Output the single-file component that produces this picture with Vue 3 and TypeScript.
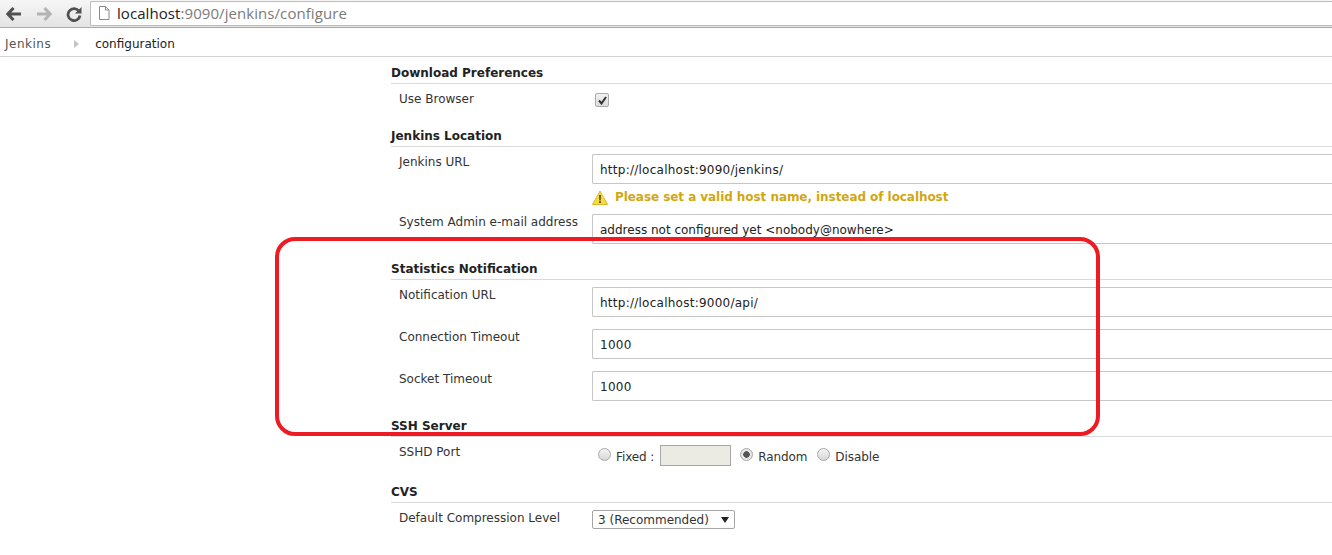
<script setup lang="ts">
import { ref } from 'vue';

const useBrowser = ref(true);
const sshMode = ref('random');

const statsRows = [
  { label: 'Notification URL', value: 'http://localhost:9000/api/' },
  { label: 'Connection Timeout', value: '1000' },
  { label: 'Socket Timeout', value: '1000' },
];
</script>

<template>
  <div class="page">
    <header class="toolbar">
      <svg class="nav" width="16" height="14" viewBox="0 0 16 14"><path d="M7.500 1 1.800 7l5.700 6M2.500 7H15" fill="none" stroke="#505050" stroke-width="3" /></svg>
      <svg class="nav fwd" width="16" height="14" viewBox="0 0 16 14"><path d="M8.500 1l5.700 6-5.700 6M13.500 7H1" fill="none" stroke="#b4b4b4" stroke-width="3" /></svg>
      <svg class="nav reload" width="16" height="16" viewBox="0 0 16 16"><path d="M13 5.200A6 6 0 1 0 14 9.500" fill="none" stroke="#505050" stroke-width="2.800" /><path d="M15.500 1v6.500H9z" fill="#505050" /></svg>
      <div class="omnibox">
        <svg width="12" height="14" viewBox="0 0 12 14"><path d="M1.500.5h6l3.500 3.500v9.500h-9.500zM7.500.5V4H11" fill="#fff" stroke="#8a8a8a" /></svg>
        <span class="url"><span class="host">localhost</span>:9090/jenkins/configure</span>
      </div>
    </header>

    <nav class="breadcrumbs">
      <a class="crumb">Jenkins</a>
      <span class="sep"></span>
      <a class="crumb current">configuration</a>
    </nav>

    <main class="form">
      <section class="section first">
        <h3>Download Preferences</h3>
        <div class="row check-row">
          <label>Use Browser</label>
          <span class="checkbox" :class="{ on: useBrowser }">
            <svg v-if="useBrowser" width="9" height="9" viewBox="0 0 9 9"><path d="M1 4.500 3.500 7.500 8 1" fill="none" stroke="#333" stroke-width="2" /></svg>
          </span>
        </div>
      </section>

      <section class="section location">
        <h3>Jenkins Location</h3>
        <div class="row">
          <label>Jenkins URL</label>
          <input class="text wide" value="http://localhost:9090/jenkins/" />
        </div>
        <div class="warning">
          <svg width="16" height="15" viewBox="0 0 16 15"><path d="M8 1 15.500 14.500H.5z" fill="#f7dc3c" stroke="#d9b92a" stroke-linejoin="round" /><path d="M7.200 5h1.600l-.2 5.500H7.400zM7.200 11.300h1.600v1.600H7.200z" fill="#333" /></svg>
          <span>Please set a valid host name, instead of localhost</span>
        </div>
        <div class="row">
          <label>System Admin e-mail address</label>
          <input class="text" value="address not configured yet &lt;nobody@nowhere&gt;" />
        </div>
      </section>

      <section class="section stats">
        <h3>Statistics Notification</h3>
        <div v-for="row in statsRows" :key="row.label" class="row spaced">
          <label>{{ row.label }}</label>
          <input class="text wide" :value="row.value" />
        </div>
      </section>

      <section class="section ssh">
        <h3>SSH Server</h3>
        <div class="row ssh-row">
          <label>SSHD Port</label>
          <div class="ssh-options">
            <span class="radio" :class="{ on: sshMode === 'fixed' }"></span>
            <span class="opt">Fixed :</span>
            <input class="port" disabled />
            <span class="radio" :class="{ on: sshMode === 'random' }"></span>
            <span class="opt">Random</span>
            <span class="radio" :class="{ on: sshMode === 'disable' }"></span>
            <span class="opt">Disable</span>
          </div>
        </div>
      </section>

      <section class="section cvs">
        <h3>CVS</h3>
        <div class="row">
          <label>Default Compression Level</label>
          <div class="select">
            <span>3 (Recommended)</span>
            <svg width="8" height="6" viewBox="0 0 8 6"><path d="M0 0h8L4 6z" fill="#222" /></svg>
          </div>
        </div>
      </section>
    </main>

    <div class="highlight"></div>
  </div>
</template>

<style>
html, body { margin: 0; background: #fff; overflow: hidden; }
</style>

<style scoped>
.page {
  position: relative;
  height: 555px;
  overflow: hidden;
  font-family: "DejaVu Sans", Verdana, sans-serif;
  font-size: 12px;
  color: #333;
}
.toolbar {
  height: 28px;
  box-sizing: border-box;
  display: flex;
  align-items: center;
  padding-left: 6px;
  background: linear-gradient(#f6f6f6, #e4e4e4);
  border-bottom: 1px solid #a9a9a9;
}
.nav { flex: none; }
.fwd { margin-left: 14px; }
.reload { margin-left: 14px; }
.omnibox {
  flex: 1;
  height: 25px;
  margin: -1px 0 0 8px;
  box-sizing: border-box;
  display: flex;
  align-items: center;
  gap: 7px;
  padding-left: 7px;
  background: #fff;
  border: 1px solid #bcbcbc;
  border-right: 0;
  border-radius: 2px 0 0 2px;
  font-family: "Open Sans", sans-serif;
  font-size: 15px;
  letter-spacing: .07px;
  color: #7b7b7b;
}
.host { color: #222; }
.breadcrumbs {
  height: 29px;
  box-sizing: border-box;
  display: flex;
  align-items: center;
  padding: 3px 0 0 5px;
  border-bottom: 1px solid #d3d3d3;
}
.crumb { color: #555; letter-spacing: .5px; }
.crumb.current { color: #222; letter-spacing: 0; }
.sep {
  width: 0;
  height: 0;
  margin: 0 16px 0 23px;
  border-left: 5px solid #c4c4c4;
  border-top: 4px solid transparent;
  border-bottom: 4px solid transparent;
}
.form { padding-left: 391px; }
.section h3 {
  margin: 0 0 7px;
  height: 19px;
  line-height: 17px;
  box-sizing: border-box;
  font-size: 12px;
  font-weight: 700;
  color: #222;
  border-bottom: 1px solid #d9d9d9;
}
.first { padding-top: 8px; }
.location { margin-top: 14px; }
.stats { margin-top: 17px; }
.ssh { margin-top: 17px; }
.cvs { margin-top: 15px; }
.row {
  display: grid;
  grid-template-columns: 201px 1fr;
  align-items: start;
}
.row label { padding: 1px 0 0 8px; color: #333; }
.spaced + .spaced { margin-top: 12px; }
.text {
  box-sizing: border-box;
  width: 100%;
  height: 30px;
  padding: 2px 7px 0;
  border: 1px solid #c6c6c6;
  border-right: 0;
  border-radius: 2px 0 0 2px;
  outline: none;
  background: #fff;
  font: 12px "DejaVu Sans", Verdana, sans-serif;
  color: #222;
}
.text.wide { letter-spacing: .25px; }
.check-row { height: 23px; }
.checkbox {
  width: 12px;
  height: 12px;
  margin: 2px 0 0 3px;
  display: flex;
  align-items: center;
  justify-content: center;
  background: linear-gradient(#f1f1f1, #dcdcdc);
  border: 1px solid #ababab;
  border-radius: 2px;
}
.warning {
  height: 30px;
  box-sizing: border-box;
  display: flex;
  align-items: center;
  gap: 7px;
  padding: 0 0 4px 201px;
  font-weight: 700;
  font-size: 12px;
  letter-spacing: -.06px;
  color: #d1a70f;
}
.ssh-row { height: 25px; }
.ssh-options {
  display: flex;
  align-items: center;
  padding: 1px 0 0 6px;
}
.radio {
  box-sizing: border-box;
  width: 13px;
  height: 13px;
  margin-top: -3px;
  border: 1px solid #a8a8a8;
  border-radius: 50%;
  background: linear-gradient(#f3f3f3, #d8d8d8);
}
.radio.on { background: radial-gradient(circle, #555 0 3px, #e6e6e6 3.500px); }
.opt { margin: 2px 0 0 5px; letter-spacing: -.1px; }
.port {
  box-sizing: border-box;
  width: 71px;
  height: 21px;
  margin: 0 9px 0 6px;
  border: 1px solid #a6a6a6;
  background: #ebebe4;
}
.opt + .radio { margin-left: 10px; }
.select {
  box-sizing: border-box;
  width: 143px;
  height: 19px;
  display: flex;
  align-items: center;
  justify-content: space-between;
  padding: 0 5px;
  border: 1px solid #a6a6a6;
  border-radius: 2px;
  background: #fff;
  color: #333;
}
.highlight {
  position: absolute;
  left: 275px;
  top: 237px;
  width: 825px;
  height: 199px;
  box-sizing: border-box;
  border: 4px solid #ed1c24;
  border-radius: 20px;
  pointer-events: none;
}
</style>
